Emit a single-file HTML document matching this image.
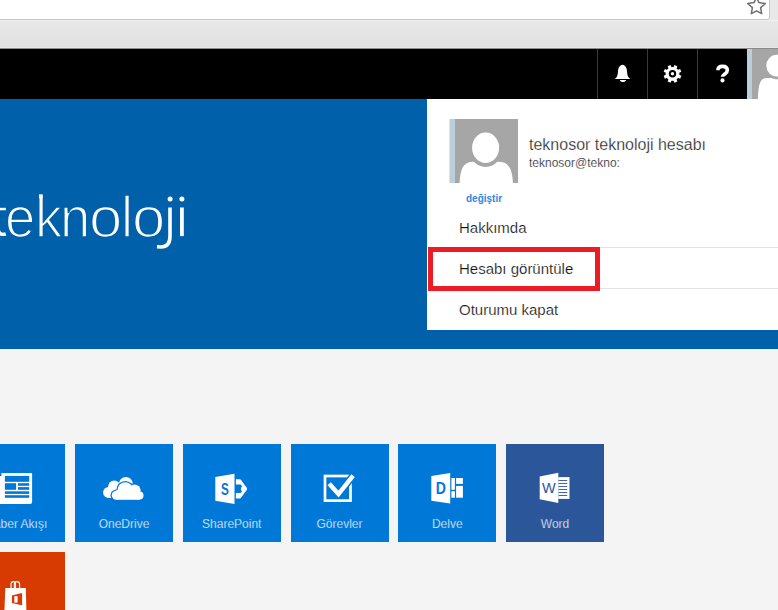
<!DOCTYPE html>
<html><head><meta charset="utf-8">
<style>
*{margin:0;padding:0;box-sizing:border-box}
html,body{width:778px;height:610px;overflow:hidden;background:#f4f4f4;font-family:"Liberation Sans",sans-serif;position:relative}
.abs{position:absolute}
#addr{left:0;top:0;width:778px;height:49px;background:linear-gradient(#e8e8e8 40%,#e0e0e0)}
#addrbox{left:-4px;top:-4px;width:774px;height:24px;background:#fff;border:1px solid #c6c6c6;border-radius:0 0 3px 0}
#addrline{left:0;top:20px;width:778px;height:1px;background:#f0f0f0}
#toolbot{left:0;top:47px;width:778px;height:1px;background:#e6e6e6}
#toolbot2{left:0;top:48px;width:778px;height:1px;background:#8a8a8a}
#nav{left:0;top:49px;width:778px;height:50px;background:#000}
.sep{top:49px;width:1px;height:50px;background:#3a3a3a}
#hero{left:0;top:99px;width:778px;height:250px;background:#0060aa}
#panel{left:427px;top:99px;width:351px;height:231px;background:#fff}
.txt{white-space:nowrap;line-height:1}
.bg{top:189px;font-size:57px;color:#fff;-webkit-text-stroke:1.7px #0060aa;transform-origin:0 0}
.menu{font-size:15px;color:#111;-webkit-text-stroke:0.2px #fff}
.hsep{left:428px;width:350px;height:1px;background:#e3e3e3}
.tile{top:444px;width:98px;height:98px;background:#0078d7}
.lbl{font-size:12px;color:#f6f9fc;-webkit-text-stroke:0.25px #0078d7;width:98px;text-align:center;top:74px;left:0}
</style></head><body>
<div class="abs" id="addr"></div>
<div class="abs" id="addrbox"></div>
<svg class="abs" style="left:744px;top:-4px" width="26" height="22" viewBox="0 0 26 22">
<path d="M12.5 1.2 L14.9 6.6 L21.2 7.6 L16.6 11.6 L17.7 17.7 L12.5 14.9 L7.3 17.7 L8.4 11.6 L3.8 7.6 L10.1 6.6 Z" fill="none" stroke="#707070" stroke-width="1.5" stroke-linejoin="round"/>
</svg>
<div class="abs" id="addrline"></div>
<div class="abs" id="toolbot"></div>
<div class="abs" id="toolbot2"></div>
<div class="abs" id="nav"></div>
<div class="abs sep" style="left:597px"></div>
<div class="abs sep" style="left:647px"></div>
<div class="abs sep" style="left:697px"></div>
<!-- bell -->
<svg class="abs" style="left:612px;top:62px" width="22" height="22" viewBox="0 0 22 22">
<path d="M10.5 2.8 C12 2.8 14.2 4.5 14.7 7 C15.2 9.5 15 12.5 16 14.5 C16.6 15.6 17.6 16.3 18.3 17.1 L2.7 17.1 C3.4 16.3 4.4 15.6 5 14.5 C6 12.5 5.8 9.5 6.3 7 C6.8 4.5 9 2.8 10.5 2.8 Z" fill="#fff"/>
<path d="M7.8 18 L14 18 C13.6 19.4 12.4 20.1 10.9 20.1 C9.4 20.1 8.2 19.4 7.8 18 Z" fill="#fff"/>
</svg>
<!-- gear -->
<svg class="abs" style="left:662px;top:63px" width="22" height="22" viewBox="0 0 22 22">
<g fill="#fff" transform="rotate(22.5 10.5 10.8)">
<circle cx="10.5" cy="10.8" r="6.9"/>
<g>
<rect x="8.9" y="1.9" width="3.2" height="4"/>
<rect x="8.9" y="15.7" width="3.2" height="4"/>
<rect x="1.6" y="9.2" width="4" height="3.2"/>
<rect x="15.4" y="9.2" width="4" height="3.2"/>
</g>
<g transform="rotate(45 10.5 10.8)"><rect x="8.9" y="1.9" width="3.2" height="4"/>
<rect x="8.9" y="15.7" width="3.2" height="4"/>
<rect x="1.6" y="9.2" width="4" height="3.2"/>
<rect x="15.4" y="9.2" width="4" height="3.2"/></g>
</g>
<circle cx="10.5" cy="10.8" r="3.7" fill="#000"/>
<circle cx="10.5" cy="10.8" r="1.7" fill="#fff"/>
</svg>
<!-- question -->
<svg class="abs" style="left:714px;top:63px" width="18" height="22" viewBox="0 0 18 22">
<path d="M3.9 7.2 C3.9 4.2 5.9 3.4 8.5 3.4 C11.2 3.4 13.3 4.7 13.3 7.2 C13.3 9.6 11.6 10.4 10.3 11.4 C9 12.4 8.5 12.8 8.5 13.7" fill="none" stroke="#fff" stroke-width="3.6"/>
<circle cx="8.5" cy="17.4" r="2.05" fill="#fff"/>
</svg>
<!-- top avatar -->
<div class="abs" style="left:747px;top:49px;width:5px;height:50px;background:#b9d0da"></div>
<div class="abs" style="left:752px;top:49px;width:26px;height:50px;background:#a6a6a6;overflow:hidden">
<svg width="40" height="50" viewBox="0 0 40 50" style="position:absolute;left:0;top:0">
<g transform="translate(2.6,-0.8) scale(0.7)"><path d="M4.5 80 C5 52 7 43 17.5 42.7 L44 42.7 C55 43 57.5 52 58 80 Z" fill="#fff"/></g>
<g transform="translate(3.4,-3.5) scale(0.7)"><ellipse cx="30.6" cy="28.7" rx="17.5" ry="19.6" fill="#a6a6a6"/>
<ellipse cx="30.6" cy="28.7" rx="15" ry="15.5" fill="#fff"/></g>
</svg>
</div>
<div class="abs" id="hero"></div>
<div id="big"><div class="abs txt bg" style="left:5px;transform:scaleX(0.955)">e</div><div class="abs txt bg" style="left:34.8px;transform:scaleX(0.955)">k</div><div class="abs txt bg" style="left:59.8px;transform:scaleX(0.955)">n</div><div class="abs txt bg" style="left:89px;transform:scaleX(1.05)">o</div><div class="abs txt bg" style="left:121.4px;transform:scaleX(0.955)">l</div><div class="abs txt bg" style="left:132.1px;transform:scaleX(1.05)">o</div><svg class="abs" style="left:150px;top:190px" width="40" height="65" viewBox="150 190 40 65">
<path d="M170 207.5 L170 236 C170 244 166.5 247 161 247 L157 246.8" fill="none" stroke="#fff" stroke-width="3.6"/>
<circle cx="170.1" cy="199" r="2.5" fill="#fff"/>
<rect x="180" y="207.5" width="3.8" height="28.6" fill="#fff"/>
<circle cx="181.9" cy="199" r="2.5" fill="#fff"/>
</svg><svg class="abs" style="left:0;top:190px" width="140" height="12" viewBox="0 190 140 12"><rect x="39.1" y="194.3" width="3.6" height="4" fill="#fff"/></svg><svg class="abs" style="left:0;top:195px" width="10" height="45" viewBox="0 195 10 45"><rect x="0" y="207.8" width="5.8" height="2.5" fill="#fff"/><path d="M-1.8 199 L-1.8 229 C-1.8 233 0.2 234.4 3 234.4 C4 234.4 5 234.2 5.8 233.9" fill="none" stroke="#fff" stroke-width="3.4"/><rect x="125.4" y="194.3" width="3.6" height="4" fill="#fff"/></svg></div>
<div class="abs" id="panel"></div>
<!-- panel avatar -->
<div class="abs" style="left:449px;top:119px;width:6px;height:64px;background:linear-gradient(90deg,#d9e5eb 1px,#b9d0da 1px)"></div>
<div class="abs" style="left:455px;top:119px;width:63px;height:64px;background:#a6a6a6;overflow:hidden">
<svg width="63" height="64" viewBox="0 0 63 64" style="position:absolute;left:0;top:0">
<path d="M4.5 66 C5 52 7 43 17.5 42.7 L44 42.7 C55 43 57.5 52 58 66 Z" fill="#fff"/>
<ellipse cx="30.6" cy="28.7" rx="17.2" ry="19.3" fill="#a6a6a6"/>
<ellipse cx="30.6" cy="28.7" rx="13.5" ry="15.2" fill="#fff"/>
</svg>
</div>
<div class="abs txt" style="left:529px;top:137px;font-size:16px;color:#1e1e1e;-webkit-text-stroke:0.25px #fff">teknosor teknoloji hesabı</div>
<div class="abs txt" style="left:529px;top:157px;font-size:12px;color:#222;-webkit-text-stroke:0.2px #fff">teknosor@tekno:</div>
<div class="abs txt" style="left:466px;top:194px;font-size:10px;font-weight:bold;color:#2f86e0">değiştir</div>
<div class="abs txt menu" style="left:459px;top:220px">Hakkımda</div>
<div class="abs hsep" style="top:247px"></div>
<div class="abs txt menu" style="left:459px;top:261px">Hesabı görüntüle</div>
<div class="abs hsep" style="top:288px"></div>
<div class="abs txt menu" style="left:459px;top:302px">Oturumu kapat</div>
<div class="abs" style="left:428px;top:247px;width:172px;height:44px;border:5px solid #ed1c24"></div>

<!-- tiles -->
<div class="abs tile" style="left:-32.75px"><div class="abs txt lbl">Haber Akışı</div></div>
<div class="abs tile" style="left:75px"><div class="abs txt lbl">OneDrive</div></div>
<div class="abs tile" style="left:182.75px"><div class="abs txt lbl">SharePoint</div></div>
<div class="abs tile" style="left:290.5px"><div class="abs txt lbl">Görevler</div></div>
<div class="abs tile" style="left:398.25px"><div class="abs txt lbl">Delve</div></div>
<div class="abs tile" style="left:506px;background:#2b579a"><div class="abs txt lbl" style="-webkit-text-stroke-color:#2b579a">Word</div></div>
<div class="abs tile" style="left:-32.75px;top:552px;background:#d83b01"></div>
<!-- tile icons -->
<svg class="abs" style="left:0;top:468px" width="40" height="40" viewBox="0 0 40 40">
<path d="M1.4 4.9 L32.1 4.9 L32.1 33.9 Q32.1 35.9 30.1 35.9 L0 35.9 L0 7.9 L1.4 7.9 Z" fill="#fff"/>
<g fill="#0078d7">
<rect x="4.9" y="7.9" width="24.3" height="5.9"/>
<rect x="4.9" y="15.2" width="11.2" height="6.6"/>
<rect x="18" y="15.2" width="11.2" height="2.6"/>
<rect x="18" y="19.1" width="11.2" height="2.7"/>
<rect x="4.9" y="23.3" width="24.3" height="2.6"/>
<rect x="4.9" y="27.2" width="24.3" height="2.6"/>
</g>
</svg>
<svg class="abs" style="left:100px;top:472px" width="48" height="32" viewBox="0 0 48 32">
<g fill="#fff">
<circle cx="25.9" cy="11.9" r="7"/><circle cx="14.2" cy="14.4" r="6"/><circle cx="8.6" cy="20.4" r="5.5"/>
<rect x="8.6" y="14" width="17.5" height="11.9"/>
</g>
<g fill="#0078d7">
<circle cx="25.3" cy="17.9" r="9"/><circle cx="34.6" cy="18.5" r="7.3"/><circle cx="39.5" cy="23.5" r="5.3"/><circle cx="16.3" cy="23.3" r="5.8"/>
<rect x="16.3" y="18" width="23.2" height="11.1"/>
</g>
<g fill="#fff">
<circle cx="25.3" cy="17.9" r="7.7"/><circle cx="34.6" cy="18.5" r="6"/><circle cx="39.5" cy="23.5" r="4"/><circle cx="16.3" cy="23.3" r="4.5"/>
<rect x="16.3" y="18" width="23.2" height="9.8"/>
</g>
</svg>
<svg class="abs" style="left:210px;top:470px" width="40" height="36" viewBox="0 0 40 36">
<path d="M25.9 9.2 L29.6 9.2 Q30.6 9.2 31.3 10.2 L36.9 18.2 Q37.3 18.8 36.9 19.4 L31.3 27.6 Q30.6 28.6 29.6 28.6 L25.9 28.6 Z" fill="#fff"/>
<path d="M25 14.5 L30.5 14.5 L32.8 17 L32.8 20.6 L30.5 23 L25 23 Z" fill="#0078d7"/>
<circle cx="33.8" cy="18.8" r="2.9" fill="#fff"/>
<path d="M5.3 7.1 L24.5 3.8 L24.5 33.9 L5.3 30.7 Z" fill="#fff"/>
<text transform="translate(14.8 24.8) scale(0.72 1)" x="0" y="0" text-anchor="middle" font-family="Liberation Sans" font-weight="bold" font-size="16.3" fill="#0078d7">S</text>
</svg>
<svg class="abs" style="left:318px;top:470px" width="40" height="36" viewBox="0 0 40 36">
<rect x="7" y="6" width="25.5" height="24.6" fill="none" stroke="#fff" stroke-width="2.7"/>
<polyline points="22,22.1 35.6,5" fill="none" stroke="#0078d7" stroke-width="7.4"/>
<polyline points="11.2,13.7 20.5,24 35.1,5.6" fill="none" stroke="#fff" stroke-width="4.4" stroke-linejoin="miter"/>
</svg>
<svg class="abs" style="left:426px;top:470px" width="40" height="36" viewBox="0 0 40 36">
<path d="M5.3 5.9 L24.2 2.9 L24.2 33.6 L5.3 30.7 Z" fill="#fff"/>
<text transform="translate(14.8 23.9) scale(0.85 1)" x="0" y="0" text-anchor="middle" font-family="Liberation Sans" font-weight="bold" font-size="16.5" fill="#0078d7">D</text>
<g fill="#fff">
<rect x="25.4" y="8" width="3.5" height="11.8"/><rect x="25.4" y="21.2" width="3.5" height="6.5"/>
<rect x="30.1" y="8" width="6.8" height="5.9"/><rect x="30.1" y="15.9" width="6.8" height="11.8"/>
</g>
</svg>
<svg class="abs" style="left:535px;top:470px" width="40" height="36" viewBox="0 0 40 36">
<path d="M4.7 6.5 L23.3 2.7 L23.3 33 L4.7 29.2 Z" fill="#fff"/>
<rect x="23.3" y="7.1" width="11.2" height="21.8" fill="#fff"/>
<g fill="#2b579a">
<rect x="23.6" y="10.1" width="8.6" height="0.9"/><rect x="23.6" y="13.1" width="8.6" height="0.9"/><rect x="23.6" y="16" width="8.6" height="0.9"/>
<rect x="23.6" y="19" width="8.6" height="0.9"/><rect x="23.6" y="22" width="8.6" height="0.9"/><rect x="23.6" y="25.1" width="8.6" height="0.9"/>
</g>
<text x="13.9" y="22.7" text-anchor="middle" font-family="Liberation Sans" font-size="14.5" fill="#2b579a">W</text>
</svg>
<svg class="abs" style="left:0;top:560px" width="40" height="50" viewBox="0 0 40 50">
<path d="M5.3 27.9 L25.8 27.9 L26.4 51 L4.4 51 Z" fill="#fff"/>
<path d="M11 27.9 L11 24.5 Q11 21.6 13.4 21.6 Q15.5 21.6 15.5 24.5 L15.5 27.9 M14.3 27.9 L14.3 24.5 Q14.3 21.6 17 21.6 Q19.6 21.6 19.6 24.5 L19.6 27.9" fill="none" stroke="#fff" stroke-width="1.1"/>
<path d="M11.9 35.6 L20.6 33.2 L22.1 33.2 L22.1 45.1 L20.6 45.1 L11.9 43 Z" fill="#d83b01"/>
<rect x="14.3" y="36.2" width="3.3" height="6.4" fill="#fff"/>
</svg>
</body></html>
